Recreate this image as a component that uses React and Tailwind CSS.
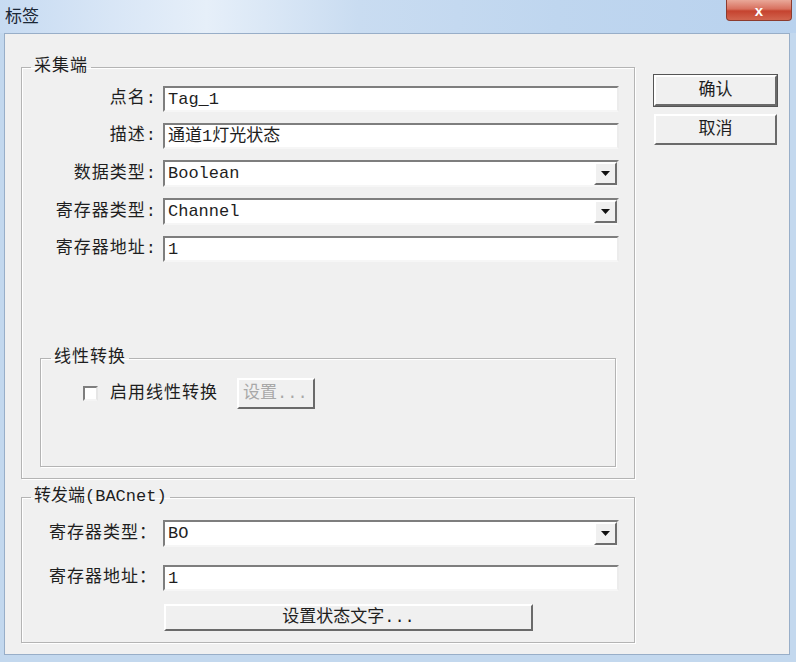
import React from 'react';

const font = { fontFamily: '"Liberation Mono", "Noto Sans CJK SC", monospace' };

const Sunken = ({ children, className = '' }) => (
  <div
    className={`relative flex items-center bg-white border-2 border-t-[#7e7e7e] border-l-[#7e7e7e] border-r-[#ececec] border-b-[#f6f6f6] ${className}`}
  >
    {children}
  </div>
);

const TextField = ({ value }) => (
  <Sunken className="w-[456px] h-[26px] pl-[3px]">
    <span className="text-[17px] leading-none text-[#1e1e1e]">{value}</span>
  </Sunken>
);

const Select = ({ value }) => (
  <Sunken className="w-[456px] h-[27px] pl-[3px]">
    <span className="flex-1 text-[17px] leading-none text-[#1e1e1e]">{value}</span>
    <div className="w-[23px] h-[23px] flex items-center justify-center bg-[#f0f0f0] border-2 border-t-white border-l-white border-r-[#6e6e6e] border-b-[#6e6e6e]">
      <svg width="9" height="5" viewBox="0 0 9 5">
        <polygon points="0,0 9,0 4.5,5" fill="#111" />
      </svg>
    </div>
  </Sunken>
);

const Row = ({ label, children }) => (
  <div className="flex items-center">
    <div className="w-[135px] mr-[6px] text-right text-[17px] tracking-[1px] text-[#1e1e1e] whitespace-nowrap">{label}</div>
    {children}
  </div>
);

const Button = ({ children, className = '', disabled = false }) => (
  <button
    className={`flex items-center justify-center bg-[#f0f0f0] border-2 border-t-white border-l-white border-r-[#6a6a6a] border-b-[#6a6a6a] text-[17px] ${
      disabled ? 'text-[#a8a8a8]' : 'text-[#1e1e1e]'
    } ${className}`}
  >
    {children}
  </button>
);

const Group = ({ title, className = '', legendClass = '', children }) => (
  <fieldset className={`border border-[#b4b4b4] shadow-[inset_1px_1px_0_#ffffff,1px_1px_0_#ffffff] ${className}`}>
    <legend className={`px-[3px] text-[17px] leading-[16px] text-[#1e1e1e] ${legendClass}`}>{title}</legend>
    {children}
  </fieldset>
);

export default function App() {
  return (
    <div className="w-[796px] h-[662px] flex flex-col bg-[#c3d8ee] select-none" style={font}>
      {/* title bar */}
      <div className="h-[33px] flex items-start bg-[linear-gradient(90deg,#c7dbf2_0%,#dde9f7_18%,#e6eff9_26%,#c9dcf1_45%,#bfd6ef_70%,#b9d2ee_100%)]">
        <span className="ml-[5px] mt-[6px] text-[17px] leading-[18px] text-[#1b2736]" style={{ fontFamily: '"Noto Sans CJK SC", sans-serif' }}>
          标签
        </span>
        <div className="ml-auto mr-[4px] w-[66px] h-[21px] rounded-b-[4px] border border-t-0 border-[#8c3b2e] bg-[linear-gradient(180deg,#e9a899_0%,#d8705e_45%,#c5432f_55%,#d2654f_100%)] flex items-center justify-center">
          <span className="text-white text-[15px] font-bold leading-none" style={{ fontFamily: '"Liberation Sans", sans-serif' }}>
            x
          </span>
        </div>
      </div>

      {/* client area */}
      <div className="flex-1 ml-[4px] mr-[6px] mb-[7px] bg-[#f0f0f0] border border-[#98aec8] flex items-start pt-[25px] pl-[16px]">
        <div className="flex flex-col w-[614px]">
          <Group title="采集端" className="h-[420px]" legendClass="ml-[9px] tracking-[1px]">
            <div className="flex flex-col gap-[11px] mt-[11px]">
              <Row label="点名:">
                <TextField value="Tag_1" />
              </Row>
              <Row label="描述:">
                <TextField value="通道1灯光状态" />
              </Row>
              <Row label="数据类型:">
                <Select value="Boolean" />
              </Row>
              <Row label="寄存器类型:">
                <Select value="Channel" />
              </Row>
              <Row label="寄存器地址:">
                <TextField value="1" />
              </Row>
            </div>

            <Group title="线性转换" className="mt-[88px] ml-[18px] w-[576px] h-[117px]" legendClass="ml-[10px] tracking-[1px]">
              <div className="flex items-center mt-[12px] h-[31px]">
                <div className="ml-[42px] w-[15px] h-[15px] bg-white border-2 border-t-[#7e7e7e] border-l-[#7e7e7e] border-r-[#e6e6e6] border-b-[#f4f4f4]" />
                <span className="ml-[12px] text-[17px] tracking-[1px] text-[#1e1e1e]">启用线性转换</span>
                <Button disabled className="ml-[19px] w-[78px] h-[31px] justify-start pl-[4px]">
                  设置...
                </Button>
              </div>
            </Group>
          </Group>

          <Group title="转发端(BACnet)" className="mt-[10px] h-[154px]" legendClass="ml-[9px]">
            <div className="flex flex-col gap-[18px] mt-[15px]">
              <Row label="寄存器类型：">
                <Select value="BO" />
              </Row>
              <Row label="寄存器地址：">
                <TextField value="1" />
              </Row>
            </div>
            <div className="flex mt-[13px] pl-[142px]">
              <Button className="w-[369px] h-[27px]">设置状态文字...</Button>
            </div>
          </Group>
        </div>

        <div className="ml-[19px] mt-[16px] flex flex-col gap-[8px]">
          <Button className="w-[123px] h-[31px] outline outline-1 outline-[#555]">确认</Button>
          <Button className="w-[123px] h-[31px]">取消</Button>
        </div>
      </div>
    </div>
  );
}
